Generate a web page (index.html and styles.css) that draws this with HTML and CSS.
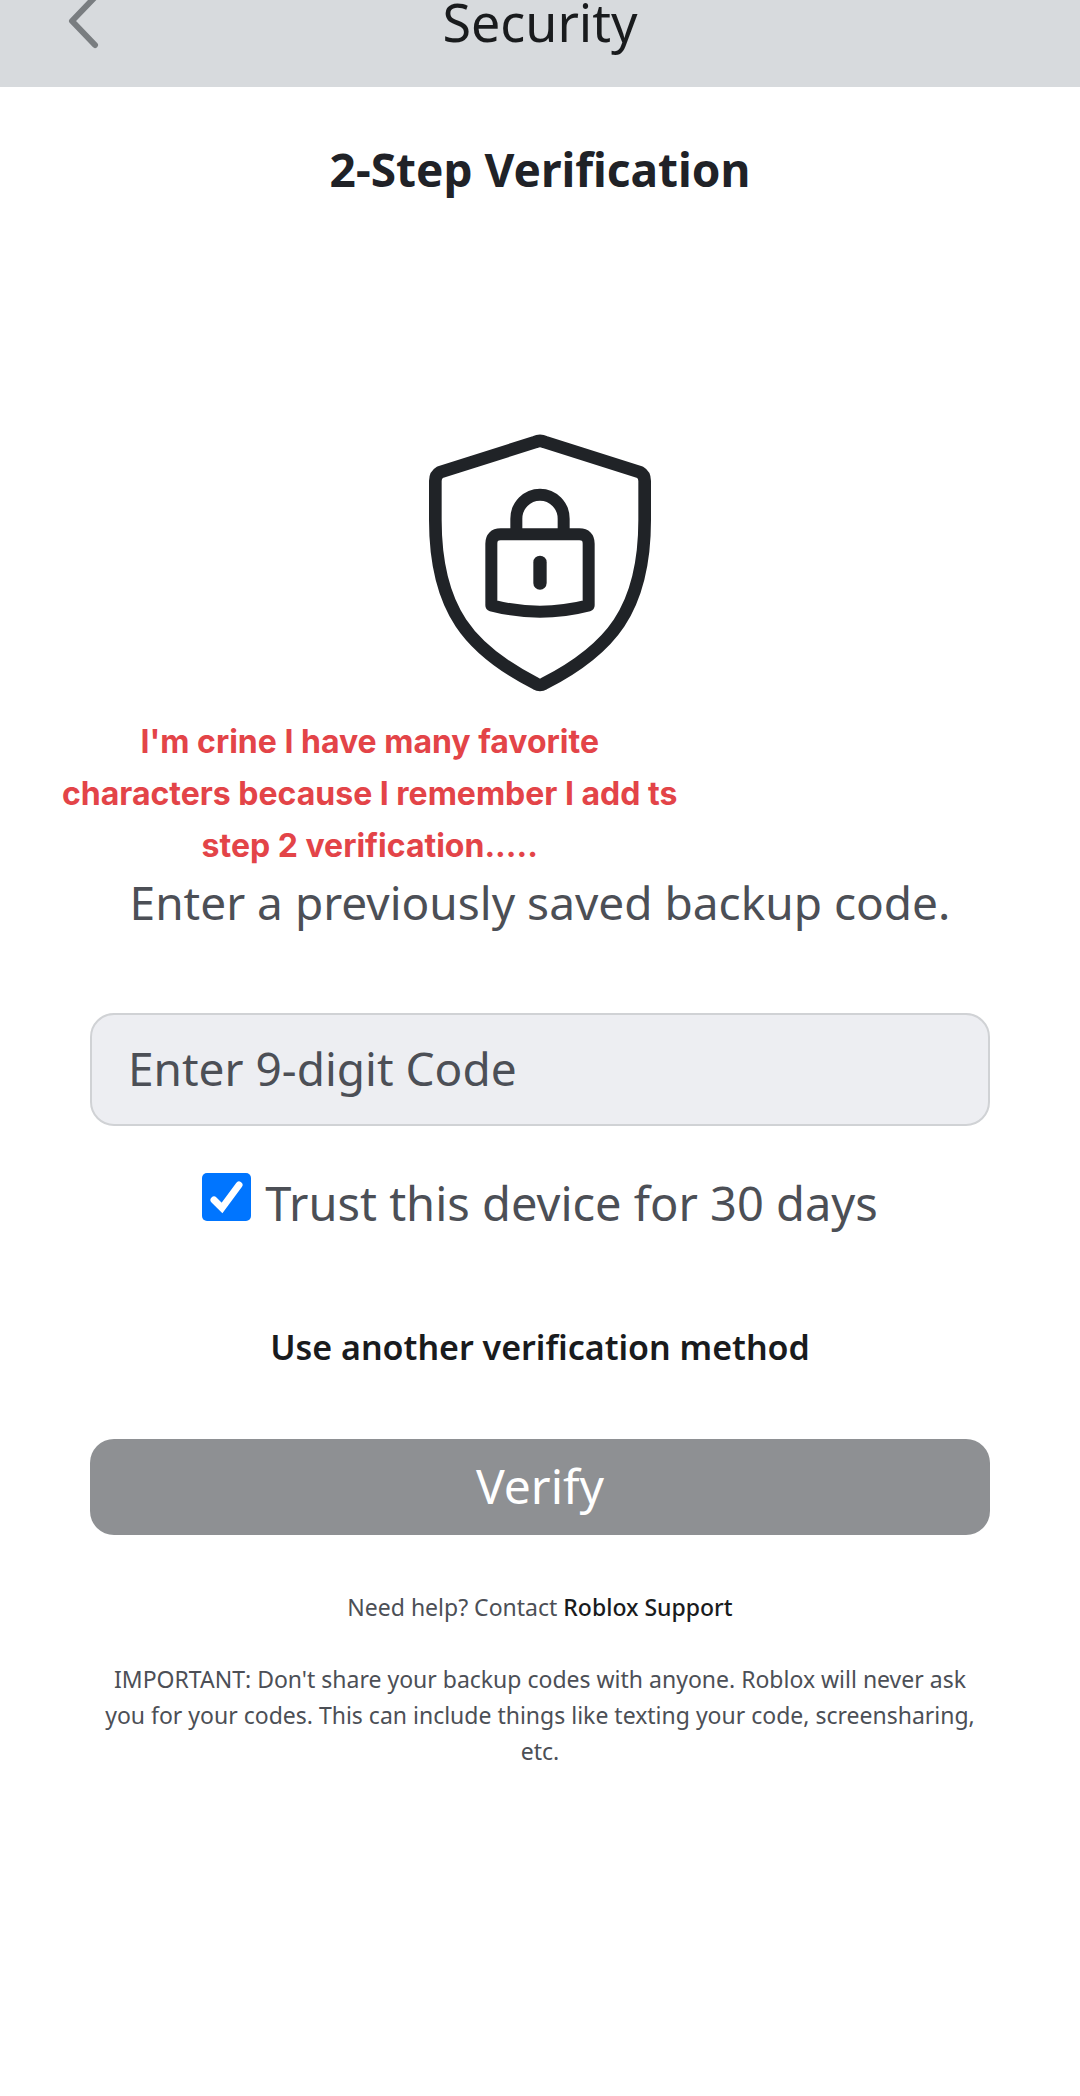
FILE: index.html
```html
<!DOCTYPE html>
<html lang="en">
<head>
<meta charset="utf-8">
<meta name="viewport" content="width=device-width, initial-scale=1">
<title>Security</title>
<link rel="stylesheet" href="styles.css">
</head>
<body>
<header class="topbar">
  <button class="back" type="button" aria-label="Back">
    <svg class="back-icon" viewBox="0 0 36 54" aria-hidden="true"><path d="M32-4 8 21l23 24"/></svg>
  </button>
  <h1 class="topbar-title">Security</h1>
</header>
<main class="page">
  <h2 class="heading">2-Step Verification</h2>
  <svg class="shield" viewBox="0 0 780 870" aria-hidden="true">
    <path class="line" d="M376 66Q390 59 404 66L690 157Q704 165 704 183V300C704 570 600 690 402 791Q390 798 378 791C180 690 76 570 76 300V183Q76 165 90 157Z"/>
    <path class="line lock" d="M319 340V296a71 72 0 0 1 142 0v44M272 343H508Q536 343 536 371V556Q390 594 244 556V371Q244 343 272 343Z"/>
    <rect class="keyhole" x="370" y="407" width="40" height="102" rx="20"/>
  </svg>
  <p class="note">I'm crine I have many favorite<br>characters because I remember I add ts<br>step 2 verification.....</p>
  <form class="form">
    <label class="prompt" for="code">Enter a previously saved backup code.</label>
    <input class="code" id="code" type="text" inputmode="numeric" placeholder="Enter 9-digit Code">
    <div class="trust">
      <input class="trust-box" id="trust" type="checkbox" checked>
      <label for="trust">Trust this device for 30 days</label>
    </div>
    <a class="method" href="#methods">Use another verification method</a>
    <button class="verify" type="button">Verify</button>
  </form>
  <p class="small">Need help? Contact <a class="support" href="#support">Roblox Support</a></p>
  <p class="small important">IMPORTANT: Don't share your backup codes with anyone. Roblox will never ask you for your codes. This can include things like texting your code, screensharing, etc.</p>
</main>
</body>
</html>
```
FILE: styles.css
```css
* { box-sizing: border-box; }
body {
  margin: 0;
  background: #fff;
  color: #4c4f56;
  font-family: "Noto Sans", sans-serif;
}
h1, h2, p { margin: 0; }
a { color: #191b1d; text-decoration: none; }

.topbar {
  display: grid;
  grid-template-columns: 1fr auto 1fr;
  align-items: start;
  padding: 0 64px 43px;
  background: #d7dadd;
}
.back {
  justify-self: start;
  height: 44px;
  padding: 0;
  border: 0;
  background: none;
}
.back-icon {
  display: block;
  width: 36px;
  height: 54px;
  fill: none;
  stroke: #797d80;
  stroke-width: 6;
  stroke-linecap: round;
  stroke-linejoin: round;
}
.topbar-title {
  color: #191b1d;
  font-size: 52px;
  font-weight: 400;
  line-height: 44px;
}

.page {
  display: flex;
  flex-direction: column;
  padding: 52px 90px 48px;
  text-align: center;
}
.heading {
  color: #202227;
  font-size: 46px;
  font-weight: 700;
  line-height: 60px;
}
.shield {
  align-self: center;
  width: 260px;
  height: 290px;
  margin-top: 221px;
}
.line {
  fill: none;
  stroke: #202327;
  stroke-width: 38;
  stroke-linejoin: round;
}
.lock { stroke-width: 36; }
.keyhole { fill: #202327; }

.note {
  align-self: flex-start;
  margin: 6px 0 0 -28px;
  color: #e34448;
  font: 700 32px/52px Inter, sans-serif;
}

.form {
  display: flex;
  flex-direction: column;
  align-items: center;
}
.prompt, .code {
  font-size: 46px;
  line-height: 60px;
}
.code {
  width: 100%;
  height: 113px;
  margin-top: 81px;
  padding: 0 36px 4px;
  border: 2px solid #d0d2d5;
  border-radius: 24px;
  background: #edeef2;
  color: #4c4f56;
  font-family: inherit;
}
.code::placeholder { color: #4c4f56; opacity: 1; }
.trust {
  display: flex;
  align-items: flex-start;
  gap: 14px;
  margin-top: 47px;
  font-size: 47px;
  line-height: 60px;
}
.trust-box {
  appearance: none;
  width: 49px;
  height: 48px;
  margin: 0;
  border-radius: 5px;
  background: #0075ff;
}
.trust-box:checked {
  background: #0075ff url("data:image/svg+xml,%3Csvg xmlns='http://www.w3.org/2000/svg' viewBox='0 0 49 48'%3E%3Cpath d='M12 27l8 8L37 12' fill='none' stroke='white' stroke-width='7' stroke-linecap='round'/%3E%3C/svg%3E") center / 100% 100% no-repeat;
}
.method {
  margin-top: 90px;
  font-size: 34px;
  font-weight: 600;
  line-height: 48px;
}
.verify {
  width: 100%;
  height: 96px;
  margin-top: 68px;
  padding: 0 0 2px;
  border: 0;
  border-radius: 24px;
  background: #8e9093;
  color: #fff;
  font-family: inherit;
  font-size: 48px;
  line-height: 60px;
}

.small {
  margin-top: 54px;
  font-size: 23px;
  line-height: 36px;
}
.support { font-weight: 500; }
.important {
  margin-top: 36px;
  padding: 0 8px;
}
```
